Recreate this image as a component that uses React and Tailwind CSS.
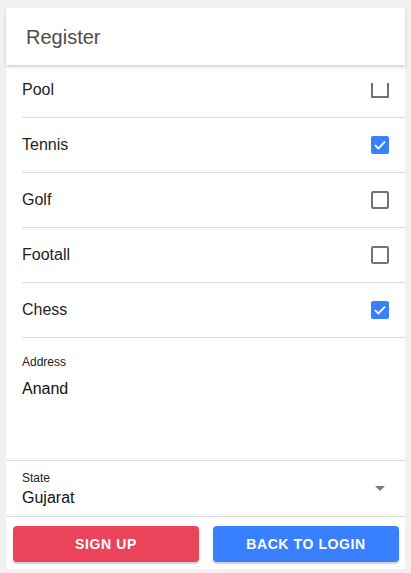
import React from 'react';

const sports = [
  { name: 'Pool', checked: false, open: true },
  { name: 'Tennis', checked: true },
  { name: 'Golf', checked: false },
  { name: 'Footall', checked: false },
  { name: 'Chess', checked: true },
];

const Box = ({ checked, open }) => {
  if (open) {
    return (
      <svg width="18" height="18" viewBox="0 0 18 18" className="block">
        <path d="M1 2 V16 H17 V2" fill="none" stroke="#737373" strokeWidth="2" />
      </svg>
    );
  }
  if (checked) {
    return (
      <svg width="18" height="18" viewBox="0 0 18 18" className="block">
        <rect x="0" y="0" width="18" height="18" rx="2" fill="#3880ff" />
        <path d="M4 9.2 L7.4 12.4 L14 5.6" fill="none" stroke="#fff" strokeWidth="1.8" />
      </svg>
    );
  }
  return <div className="w-[18px] h-[18px] rounded-[2px] border-2 border-[#737373]" />;
};

export default function App() {
  return (
    <div className="min-h-[573px] bg-[#f1f1f1] pt-2 px-[6px] font-['Liberation_Sans',Arial,sans-serif]">
      <div className="bg-white h-[561px] flex flex-col">
        <div className="h-[57px] flex items-center px-5 relative z-10 shadow-[0_2px_3px_rgba(0,0,0,0.18)]">
          <h1 className="text-[20px] text-[#4d4d4d]">Register</h1>
        </div>

        <div className="overflow-hidden flex-1 flex flex-col">
          <div className="-mt-[2px]">
            {sports.map((s) => (
              <div
                key={s.name}
                className="ml-4 pr-4 h-[55px] flex items-center justify-between border-b border-[#dcdcdc]"
              >
                <span className="text-[16px] text-[#222]">{s.name}</span>
                <Box checked={s.checked} open={s.open} />
              </div>
            ))}
          </div>

          <div className="h-[123px] border-b border-[#dcdcdc] px-4 pt-[17px]">
            <div className="text-[12px] text-[#222] leading-[14px]">Address</div>
            <div className="text-[16px] text-[#111] mt-[8px]">Anand</div>
          </div>

          <div className="h-[56px] border-b border-[#dcdcdc] px-4 flex items-center justify-between">
            <div className="pt-[2px]">
              <div className="text-[12px] text-[#222] leading-[14px]">State</div>
              <div className="text-[16px] text-[#111] leading-[20px] mt-[3px]">Gujarat</div>
            </div>
            <svg width="10" height="5" viewBox="0 0 10 5" className="mr-[4px]">
              <path d="M0 0 H10 L5 5 Z" fill="#7a7a7a" />
            </svg>
          </div>

          <div className="flex gap-[14px] pl-[7px] pr-[6px] pt-[9px]">
            <button className="flex-1 h-[36px] rounded-[4px] bg-[#eb445a] text-white text-[14px] font-bold tracking-[0.6px] shadow-[0_2px_2px_rgba(0,0,0,0.2)]">
              SIGN UP
            </button>
            <button className="flex-1 h-[36px] rounded-[4px] bg-[#3880ff] text-white text-[14px] font-bold tracking-[0.6px] shadow-[0_2px_2px_rgba(0,0,0,0.2)]">
              BACK TO LOGIN
            </button>
          </div>
        </div>
      </div>
    </div>
  );
}
